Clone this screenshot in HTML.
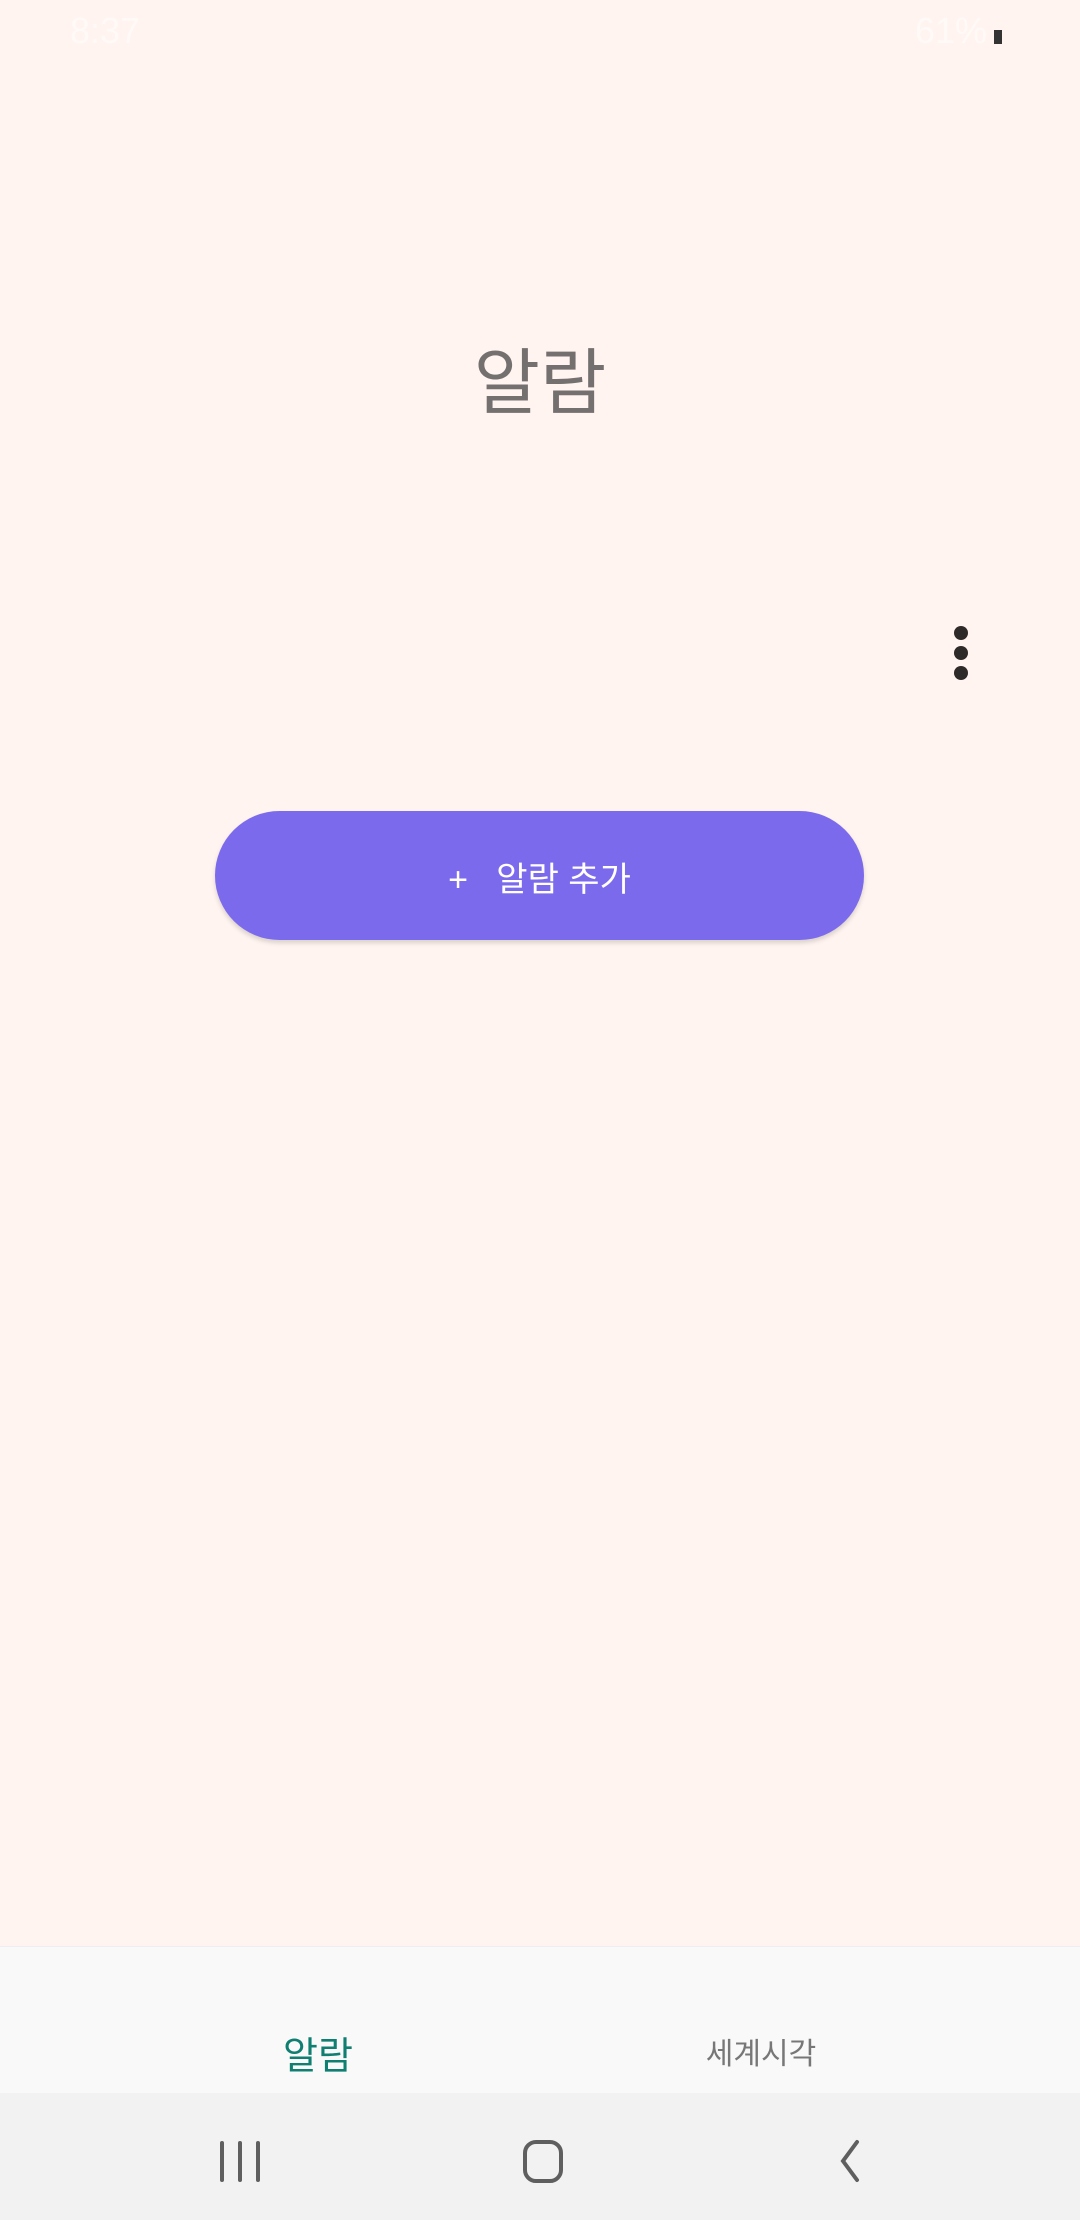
<!DOCTYPE html>
<html><head><meta charset="utf-8"><style>
html,body{margin:0;padding:0;}
body{width:1080px;height:2220px;position:relative;background:#fff4ef;overflow:hidden;font-family:"Liberation Sans","Noto Sans CJK KR",sans-serif;}
.abs{position:absolute;}
</style></head><body>
<div class="abs" style="left:70px;top:10px;font-size:36px;color:#fffaf7;">8:37</div>
<div class="abs" style="left:915px;top:10px;font-size:36px;color:#fffaf7;">61%</div>
<div class="abs" style="left:994px;top:30px;width:8px;height:14px;background:#333;"></div>

<div class="abs" style="left:0;width:1080px;top:334px;text-align:center;font-size:72px;line-height:100px;color:#757070;">알람</div>

<div class="abs" style="left:954px;top:626px;width:14px;height:14px;border-radius:50%;background:#2e2a2a;"></div>
<div class="abs" style="left:954px;top:646px;width:14px;height:14px;border-radius:50%;background:#2e2a2a;"></div>
<div class="abs" style="left:954px;top:666px;width:14px;height:14px;border-radius:50%;background:#2e2a2a;"></div>

<div class="abs" style="left:215px;top:811px;width:649px;height:129px;border-radius:65px;background:#7c6aed;box-shadow:0 3px 5px rgba(0,0,0,0.15);color:#fff;font-size:34px;line-height:139px;text-align:center;">+&nbsp;&nbsp;&nbsp;알람 추가</div>

<div class="abs" style="left:0;top:1946px;width:1080px;height:147px;background:#f9f9f9;border-top:1px solid #eee;"></div>
<div class="abs" style="left:268px;width:100px;text-align:center;top:2032px;font-size:38px;line-height:50px;color:#0f7f72;">알람</div>
<div class="abs" style="left:681px;width:160px;text-align:center;top:2032px;font-size:30px;line-height:46px;color:#777;">세계시각</div>

<div class="abs" style="left:0;top:2093px;width:1080px;height:127px;background:#f2f2f2;"></div>
<svg class="abs" style="left:0;top:2093px" width="1080" height="127">
<g stroke="#5f5f5f" stroke-width="4" fill="none" stroke-linecap="round">
<line x1="222" y1="50" x2="222" y2="87"/><line x1="240" y1="50" x2="240" y2="87"/><line x1="258" y1="50" x2="258" y2="87"/>
<rect x="525" y="49" width="36" height="39" rx="11"/>
<polyline points="857,49 843,68 857,87"/>
</g></svg>
</body></html>
